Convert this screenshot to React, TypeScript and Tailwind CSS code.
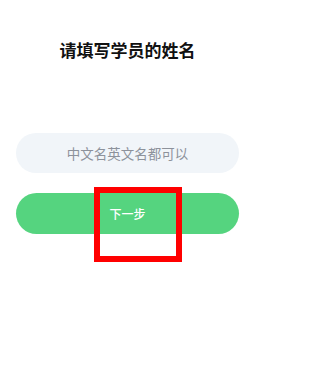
import React, { useState } from 'react';

export default function App() {
  const [name, setName] = useState('');

  return (
    <div
      className="relative h-[375px] w-[246px] bg-white"
      style={{ fontFamily: '"Noto Sans CJK SC", "Noto Sans", sans-serif' }}
    >
      <div className="ml-4 flex w-[223px] flex-col">
        {/* Title */}
        <h1 className="mt-[38px] text-center text-[17px] font-bold leading-[24px] text-[#111111]">
          请填写学员的姓名
        </h1>

        {/* Name input */}
        <input
          value={name}
          onChange={(e) => setName(e.target.value)}
          placeholder="中文名英文名都可以"
          className="mt-[71px] h-[40px] w-full rounded-full bg-[#f1f5f9] text-center text-[13.5px] text-[#333] outline-none placeholder:text-[#8d929b]"
        />

        {/* Next button */}
        <button className="mt-[20px] flex h-[41px] w-full items-center justify-center rounded-full bg-[#55d47f] text-[12px] font-medium text-white">
          下一步
        </button>
      </div>

      {/* Highlight marker */}
      <div className="pointer-events-none absolute left-[94px] top-[187px] h-[75px] w-[88px] border-[6px] border-[#ff0000]" />
    </div>
  );
}
